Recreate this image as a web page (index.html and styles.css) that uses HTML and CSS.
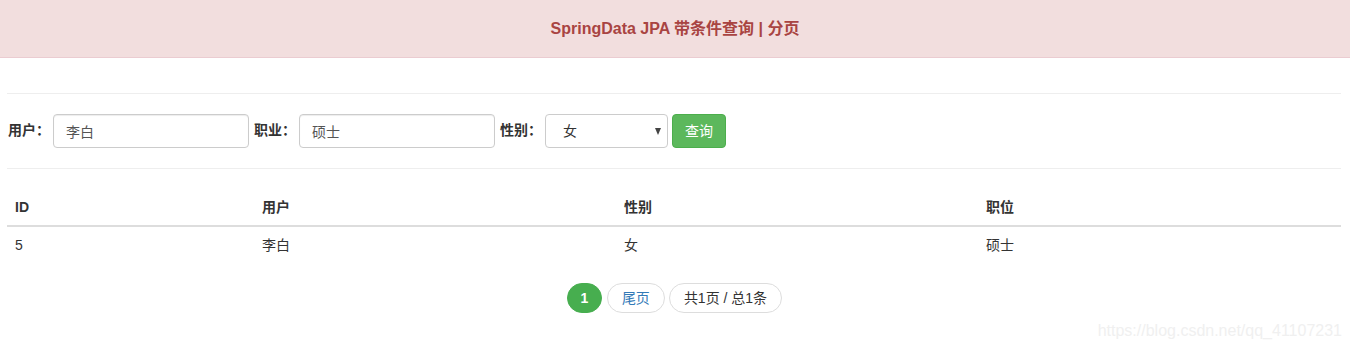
FILE: index.html
```html
<!DOCTYPE html>
<html lang="zh-CN">
<head>
<meta charset="utf-8">
<title>SpringData JPA 带条件查询 | 分页</title>
<link rel="stylesheet" href="styles.css">
</head>
<body>
<header class="banner">
  <h1 class="banner-title">SpringData JPA 带条件查询 | 分页</h1>
</header>
<main class="container">
  <hr class="divider">
  <form class="search-form">
    <label class="field-label">用户：</label>
    <input class="text-input" type="text" value="李白">
    <label class="field-label">职业：</label>
    <input class="text-input" type="text" value="硕士">
    <label class="field-label">性别：</label>
    <span class="select-wrap">
      <select class="select-input">
        <option>女</option>
      </select>
      <span class="select-arrow"></span>
    </span>
    <button type="button" class="btn-search">查询</button>
  </form>
  <hr class="divider">
  <table class="data-table">
    <thead>
      <tr>
        <th class="col-id">ID</th>
        <th class="col-user">用户</th>
        <th class="col-sex">性别</th>
        <th>职位</th>
      </tr>
    </thead>
    <tbody>
      <tr>
        <td>5</td>
        <td>李白</td>
        <td>女</td>
        <td>硕士</td>
      </tr>
    </tbody>
  </table>
  <nav class="pager">
    <span class="page-item active">1</span>
    <a class="page-item link" href="#">尾页</a>
    <span class="page-item">共1页 / 总1条</span>
  </nav>
</main>
<div class="watermark">https://blog.csdn.net/qq_41107231</div>
</body>
</html>
```
FILE: styles.css
```css
* { box-sizing: border-box; }
html, body {
  margin: 0;
  padding: 0;
  background: #fff;
  color: #333;
  font-family: "Liberation Sans", Arial, "Noto Sans CJK SC", sans-serif;
  font-size: 14px;
  line-height: 20px;
}
.banner {
  height: 58px;
  background: #f2dede;
  border-bottom: 1px solid #ebccd1;
  display: flex;
  align-items: center;
  justify-content: center;
}
.banner-title {
  margin: 0;
  font-size: 16px;
  font-weight: bold;
  color: #a94442;
  line-height: 20px;
  padding-top: 1px;
}
.container {
  margin: 0 9px 0 7px;
  padding-top: 35px;
}
.divider {
  margin: 0;
  border: 0;
  border-top: 1px solid #eee;
}
.search-form {
  display: flex;
  align-items: center;
  gap: 4px;
  margin: 20px 0;
  height: 34px;
}
.field-label {
  font-weight: bold;
  width: 42px;
  white-space: nowrap;
  margin-top: -3px;
  padding-left: 1px;
}
.text-input {
  width: 196px;
  height: 34px;
  padding: 6px 12px;
  border: 1px solid #ccc;
  border-radius: 4px;
  font: inherit;
  color: #555;
  box-shadow: inset 0 1px 1px rgba(0,0,0,.075);
}
.select-wrap {
  position: relative;
  display: inline-block;
  width: 123px;
  height: 34px;
}
.select-input {
  appearance: none;
  -webkit-appearance: none;
  width: 100%;
  height: 34px;
  padding: 6px 12px 6px 17px;
  border: 1px solid #ccc;
  border-radius: 4px;
  background: #fff;
  font: inherit;
  color: #333;
}
.select-arrow {
  position: absolute;
  right: 7px;
  top: 14px;
  width: 0;
  height: 0;
  border-left: 3.5px solid transparent;
  border-right: 3.5px solid transparent;
  border-top: 7px solid #444;
  pointer-events: none;
}
.btn-search {
  width: 54px;
  height: 34px;
  background: #5cb85c;
  border: 1px solid #4cae4c;
  border-radius: 4px;
  color: #fff;
  font: inherit;
  padding: 0;
}
.data-table {
  width: 100%;
  border-collapse: collapse;
  border-spacing: 0;
  margin: 20px 0 20px 0;
}
.data-table th,
.data-table td {
  text-align: left;
  padding: 8px;
  line-height: 20px;
  vertical-align: top;
}
.data-table th {
  font-weight: bold;
  border-bottom: 2px solid #ddd;
}
.col-id { width: 247px; }
.col-user { width: 362px; }
.col-sex { width: 362px; }
.pager {
  display: flex;
  justify-content: center;
  gap: 4px;
  margin-left: 1px;
}
.page-item {
  display: inline-flex;
  align-items: center;
  justify-content: center;
  height: 30px;
  padding: 0 14px;
  border: 1px solid #ddd;
  border-radius: 15px;
  color: #333;
  text-decoration: none;
  background: #fff;
}
.page-item.link { color: #337ab7; }
.page-item.active {
  width: 35px;
  padding: 0;
  background: #47ae4f;
  border-color: #47ae4f;
  color: #fff;
  font-weight: bold;
  margin-right: 1px;
}
.watermark {
  position: absolute;
  right: 8px;
  top: 321px;
  font-size: 16px;
  line-height: 20px;
  color: #f0f0f0;
  pointer-events: none;
}
```
